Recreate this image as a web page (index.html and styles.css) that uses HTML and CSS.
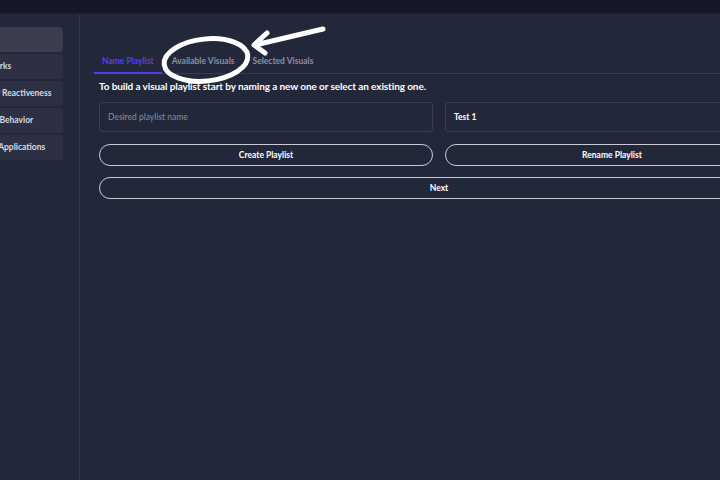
FILE: index.html
```html
<!DOCTYPE html>
<html lang="en">
<head>
<meta charset="UTF-8">
<meta name="viewport" content="width=device-width, initial-scale=1.0">
<title>Visual Playlist</title>
<link rel="stylesheet" href="styles.css">
</head>
<body>

<div class="topbar"></div>

<div class="layout">
  <div class="sidebar">
    <div class="side-item active">Home</div>
    <div class="side-item">Networks</div>
    <div class="side-item">Energy Reactiveness</div>
    <div class="side-item">Player Behavior</div>
    <div class="side-item">Other Applications</div>
  </div>

  <div class="main">
    <div class="tabs">
      <div class="tab active">Name Playlist</div>
      <div class="tab">Available Visuals</div>
      <div class="tab">Selected Visuals</div>
    </div>

    <div class="content">
      <p class="intro">To build a visual playlist start by naming a new one or select an existing one.</p>

      <div class="grid">
        <input type="text" class="field" placeholder="Desired playlist name">
        <div class="field select">Test 1</div>
        <button class="pill">Create Playlist</button>
        <button class="pill">Rename Playlist</button>
        <button class="pill wide">Next</button>
      </div>
    </div>

    <!-- hand drawn markup over the tabs -->
    <svg class="markup" width="720" height="120" viewBox="0 0 720 120">
      <ellipse cx="206" cy="60" rx="42" ry="21" transform="rotate(-6 206 60)" fill="none" stroke="#fff" stroke-width="5"/>
      <path d="M323 29 L255 45 M267 33 L254 45 L265 53" fill="none" stroke="#fff" stroke-width="5" stroke-linecap="round" stroke-linejoin="round"/>
    </svg>
  </div>
</div>

</body>
</html>
```

FILE: styles.css
```css
* {
  box-sizing: border-box;
  font-family: "Lato", "Open Sans", sans-serif;
}
body {
  margin: 0;
  width: 720px;
  height: 480px;
  overflow: hidden;
  background: #23273a;
  color: #fff;
}

.topbar {
  height: 14px;
  background: #151826;
  border-bottom: 1px solid #1b1e2d;
}

.layout {
  display: flex;
  height: 466px;
  margin-left: -40px;
  width: 860px;
}

.sidebar {
  width: 120px;
  flex-shrink: 0;
  padding: 13px 16px 0 0;
  border-right: 1px solid #31364a;
  display: flex;
  flex-direction: column;
  gap: 2px;
}
.side-item {
  height: 25px;
  line-height: 25px;
  padding-left: 14px;
  background: #2c3042;
  border-radius: 4px;
  font-size: 8.5px;
  font-weight: 700;
  color: #d8dae2;
  white-space: nowrap;
}
.side-item.active {
  background: #393d4e;
}

.main {
  position: relative;
  flex: 1;
  padding: 0 0 0 14px;
}

.tabs {
  display: flex;
  margin-top: 38px;
  border-bottom: 1px solid #363b4e;
}
.tab {
  padding: 4px 8px 6px;
  font-size: 8.5px;
  font-weight: 700;
  color: #8b90a6;
  margin-right: 2px;
}
.tab.active {
  color: #5a3cf0;
  border-bottom: 2px solid #5a3cf0;
  margin-bottom: -1px;
}

.content {
  padding-left: 5px;
  width: 685px;
}
.intro {
  margin: 6px 0 10px;
  font-size: 10px;
  font-weight: 700;
  letter-spacing: -0.1px;
  color: #fff;
}

.grid {
  display: grid;
  grid-template-columns: 334px 334px;
  gap: 12px;
  row-gap: 12px;
}
.field {
  height: 30px;
  background: #23273a;
  border: 1px solid #3a3f52;
  border-radius: 3px;
  padding: 0 8px;
  font-size: 8.5px;
  color: #fff;
  outline: none;
}
.field::placeholder {
  color: #8a8e9e;
}
.select {
  padding-top: 9px;
  font-weight: 700;
}

.pill {
  height: 22px;
  background: #23273a;
  border: 1.5px solid #c9cbd4;
  border-radius: 12px;
  color: #fff;
  font-size: 8.5px;
  font-weight: 700;
  cursor: pointer;
}
.pill.wide {
  grid-column: 1 / 3;
  margin-top: -1px;
}

.markup {
  position: absolute;
  top: -14px;
  left: -80px;
  pointer-events: none;
}
```
